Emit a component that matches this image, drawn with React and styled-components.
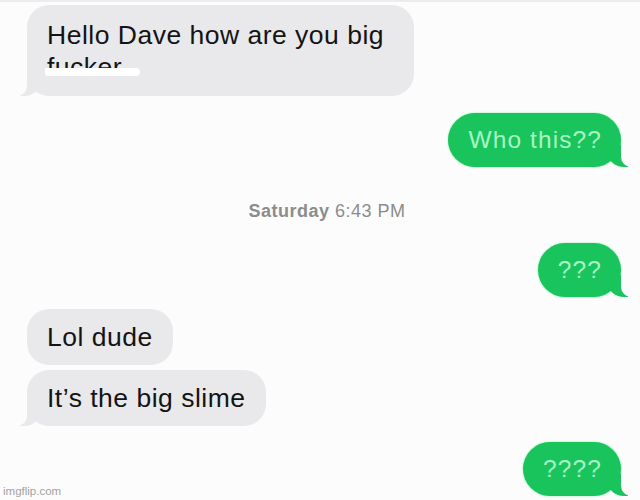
import React from 'react'
import styled, { createGlobalStyle, css } from 'styled-components'

const GlobalStyle = createGlobalStyle`
    html, body {
        margin: 0;
        padding: 0;
        background: #fcfcfc;
    }
    body {
        font-family: "Liberation Sans", Arial, sans-serif;
    }
`

const App = () => {
    return (
        <Page>
            <GlobalStyle />
            <Bubble $tail>
                Hello Dave how are you big<br />
                <Censor>fucker</Censor>
            </Bubble>
            <Bubble $me $tail $gap={17}>Who this??</Bubble>
            <Stamp>
                <b>Saturday</b> 6:43 PM
            </Stamp>
            <Bubble $me $tail $gap={21}>???</Bubble>
            <Bubble $gap={12}>Lol dude</Bubble>
            <Bubble $tail $gap={5}>It’s the big slime</Bubble>
            <Bubble $me $tail $gap={16}>????</Bubble>
            <Watermark>imgflip.com</Watermark>
        </Page>
    )
}

export default App

const Page = styled.div`
    position: relative;
    box-sizing: border-box;
    width: 640px;
    height: 500px;
    overflow: hidden;
    border-top: 2px solid #ececec;
    padding: 3px 19px 0 27px;
    display: flex;
    flex-direction: column;
`

const grayTail = css`
    &:before {
        left: -7px;
        width: 20px;
        background: #e9e9eb;
        border-bottom-right-radius: 16px 14px;
    }
    &:after {
        left: -26px;
        width: 26px;
        background: #fcfcfc;
        border-bottom-right-radius: 10px;
    }
`

const greenTail = css`
    &:before {
        right: -7px;
        width: 20px;
        background: #18c45b;
        border-bottom-left-radius: 16px 14px;
    }
    &:after {
        right: -26px;
        width: 26px;
        background: #fcfcfc;
        border-bottom-left-radius: 10px;
    }
`

const Bubble = styled.div`
    position: relative;
    align-self: ${p => (p.$me ? 'flex-end' : 'flex-start')};
    margin-top: ${p => p.$gap || 0}px;
    white-space: nowrap;
    border-radius: ${p => (p.$me ? '27px' : '22px')};
    background: ${p => (p.$me ? '#18c45b' : '#e9e9eb')};
    color: ${p => (p.$me ? '#a9f5c6' : '#141414')};
    font-size: ${p => (p.$me ? '24.5px' : '26.5px')};
    letter-spacing: ${p => (p.$me ? '1.1px' : '0.5px')};
    line-height: ${p => (p.$me ? '30px' : '32px')};
    padding: ${p => (p.$me ? '12px 19px 12px 20px' : '12px 20px')};
    box-shadow: ${p => (p.$me ? '0 0 2px #6fe99a' : 'none')};

    &:first-child {
        padding: 14px 30px 13px 20px;
    }

    ${p => p.$tail && css`
        &:before, &:after {
            content: "";
            position: absolute;
            bottom: 0;
            height: 22px;
        }
        ${p.$me ? greenTail : grayTail}
    `}
`

const Censor = styled.span`
    position: relative;

    &:after {
        content: "";
        position: absolute;
        left: -2px;
        right: -18px;
        top: 16px;
        height: 8px;
        background: #fff;
        border-radius: 2px 6px 6px 3px;
        filter: blur(0.6px);
    }
`

const Stamp = styled.div`
    margin-top: 33px;
    align-self: center;
    margin-left: 6px;
    font-size: 18px;
    line-height: 22px;
    letter-spacing: 0.5px;
    color: #8c8c8c;

    b {
        font-weight: 600;
    }
`

const Watermark = styled.div`
    position: absolute;
    left: 3px;
    bottom: 3px;
    font-size: 11.5px;
    color: #a2a2a2;
`
